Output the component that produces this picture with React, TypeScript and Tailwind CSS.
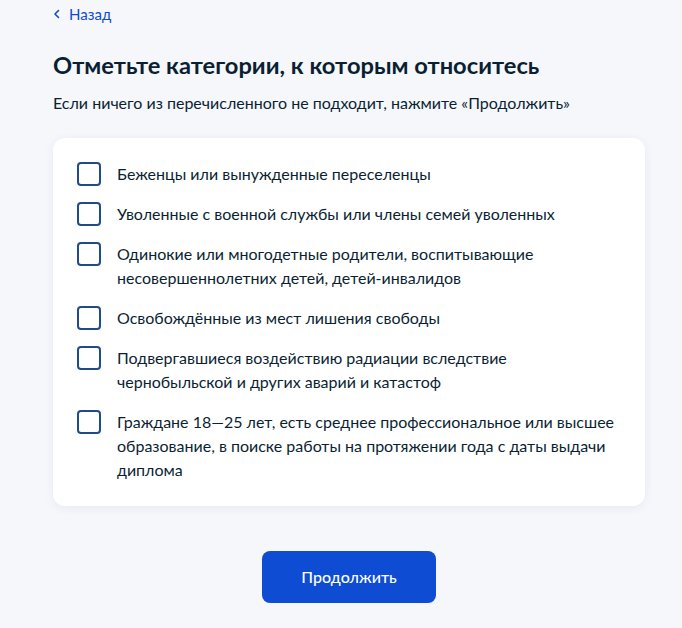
import { useState } from 'react';

const categories = [
  'Беженцы или вынужденные переселенцы',
  'Уволенные с военной службы или члены семей уволенных',
  'Одинокие или многодетные родители, воспитывающие несовершеннолетних детей, детей-инвалидов',
  'Освобождённые из мест лишения свободы',
  'Подвергавшиеся воздействию радиации вследствие чернобыльской и других аварий и катастоф',
  'Граждане 18—25 лет, есть среднее профессиональное или высшее образование, в поиске работы на протяжении года с даты выдачи диплома',
];

export default function App() {
  const [checked, setChecked] = useState<boolean[]>(categories.map(() => false));

  const toggle = (i: number) =>
    setChecked((prev) => prev.map((v, j) => (j === i ? !v : v)));

  return (
    <div className="min-h-[628px] bg-[#f5f7fb] font-['Lato','Noto_Sans',sans-serif] text-[#0b1f33]">
      <div className="ml-[53px] w-[592px]">
        <a href="#" className="flex items-center gap-[8px] pt-[4px] text-[15px] leading-[20px] text-[#0d4cd3]">
          <svg width="8" height="10" viewBox="0 0 8 10" fill="none">
            <path d="M5.5 1.5 2 5l3.5 3.5" stroke="#0d4cd3" strokeWidth="1.6" strokeLinecap="round" strokeLinejoin="round" />
          </svg>
          Назад
        </a>

        <h1 className="mt-[25px] text-[23.7px] font-bold leading-[32px]">
          Отметьте категории, к которым относитесь
        </h1>
        <p className="mt-[10px] text-[16px] leading-[24px]">
          Если ничего из перечисленного не подходит, нажмите «Продолжить»
        </p>

        <div className="mt-[23px] flex flex-col gap-[16px] rounded-[12px] bg-white p-[24px] shadow-[0_2px_10px_rgba(30,60,120,0.07)]">
          {categories.map((label, i) => (
            <label key={label} className="flex cursor-pointer items-start gap-[16px]">
              <input
                type="checkbox"
                className="sr-only"
                checked={checked[i]}
                onChange={() => toggle(i)}
              />
              <span className="flex h-[24px] w-[24px] shrink-0 items-center justify-center rounded-[4px] border-2 border-[#1f4a8c] bg-white">
                {checked[i] && (
                  <svg width="14" height="10" viewBox="0 0 14 10" fill="none">
                    <path d="M1.5 5 5.5 8.5 12.5 1.5" stroke="#1f4a8c" strokeWidth="2" strokeLinecap="round" strokeLinejoin="round" />
                  </svg>
                )}
              </span>
              <span className="text-[16px] leading-[24px]">{label}</span>
            </label>
          ))}
        </div>

        <div className="mt-[45px] flex justify-center">
          <button className="h-[52px] w-[174px] rounded-[8px] bg-[#0d4cd3] text-[16px] font-medium text-white">
            Продолжить
          </button>
        </div>
      </div>
    </div>
  );
}
